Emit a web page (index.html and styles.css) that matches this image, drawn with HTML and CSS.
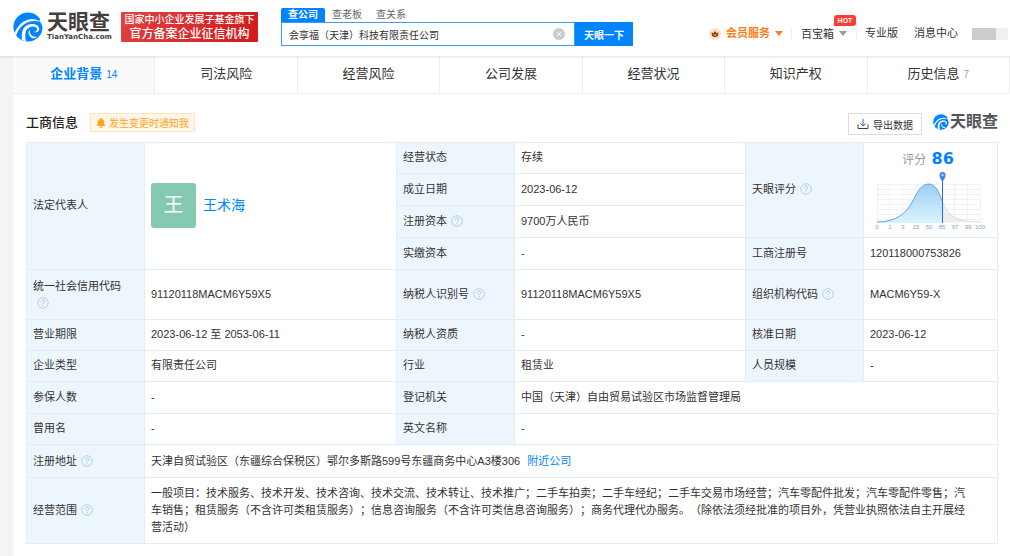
FILE: index.html
```html
<!DOCTYPE html>
<html lang="zh-CN">
<head>
  <meta charset="UTF-8">
  <meta name="viewport" content="width=device-width, initial-scale=1.0">
  <title>天眼查</title>
  <link rel="stylesheet" href="styles.css">
</head>
<body>

  <!-- shared icons -->
  <svg class="sprite" aria-hidden="true">
    <symbol id="logo" viewBox="0 0 30 30">
      <circle cx="15" cy="15" r="14.6" fill="#0084ff"/>
      <path d="M1 22 C4 15 8 10 14 8 C19 6 24 7 27 10 C22 8 17 9 13 11 C8 14 5 18 3 24 Z" fill="#fff"/>
      <path d="M9 28 C8 20 10 14 16 12.500 C20 11.500 25 12 26 16 C27 19 24 21 21 20 C24 20 25 17 23 15.500 C20 13.500 15 15 13 19 C12 22 12 26 13 29.500 Z" fill="#fff"/>
      <path d="M17 17.500 C16 22 19 25 24 25 C22 27 19 26.500 17 24.500 C15 22 15 19 17 17.500 Z" fill="#fff"/>
      <path d="M26 8 L30 6 V16 C29 13 28 11 26 8 Z" fill="#fff"/>
    </symbol>
    <symbol id="help" viewBox="0 0 12 12">
      <circle cx="6" cy="6" r="5.3" fill="none" stroke="#b4d0ea"/>
      <path d="M4.400 4.800 C4.400 2.600 7.700 2.600 7.700 4.600 C7.700 5.800 6 5.800 6 7.200 M6 8.200 V9.200" fill="none" stroke="#a3c5e6"/>
    </symbol>
  </svg>

  <header class="header">
    <a class="brand" href="#">
      <svg class="brand-icon"><use href="#logo"/></svg>
      <span class="brand-text">
        <span class="brand-name">天眼查</span>
        <span class="brand-site">TianYanCha.com</span>
      </span>
    </a>
    <div class="slogan">
      <span>国家中小企业发展子基金旗下</span>
      <span class="slogan-big">官方备案企业征信机构</span>
    </div>

    <form class="search">
      <div class="search-tabs">
        <button type="button" class="search-tab active">查公司</button>
        <button type="button" class="search-tab">查老板</button>
        <button type="button" class="search-tab">查关系</button>
      </div>
      <div class="search-row">
        <div class="search-field">
          <input type="text" aria-label="搜索公司" value="会享福（天津）科技有限责任公司">
          <button type="reset" class="clear" aria-label="清除">
            <svg viewBox="0 0 12 12"><circle cx="6" cy="6" r="6" fill="#ccc"/><path d="M4 4 L8 8 M8 4 L4 8" stroke="#fff"/></svg>
          </button>
        </div>
        <button type="button" class="search-btn">天眼一下</button>
      </div>
    </form>

    <nav class="nav">
      <a class="vip" href="#">
        <svg class="crown" viewBox="0 0 12 12"><circle cx="6" cy="6" r="6" fill="#fde0c5"/><path d="M2.500 4.500 L4.500 5 L6 3 L7.500 5 L9.500 4.500 L9 8 Q6 10 3 8 Z" fill="#8a4312"/><path d="M4.800 6.300 L6 7.500 L7.200 6.300" fill="none" stroke="#fde0c5"/></svg>
        会员服务<i class="caret"></i>
      </a>
      <a class="box" href="#">百宝箱<i class="caret"></i><b class="hot">HOT</b></a>
      <a class="pro" href="#">专业版</a>
      <a href="#">消息中心</a>
      <span class="user"></span>
    </nav>
  </header>

  <main class="page">
    <nav class="tabs">
      <a class="tab active" href="#">企业背景<small>14</small></a>
      <a class="tab" href="#">司法风险</a>
      <a class="tab" href="#">经营风险</a>
      <a class="tab" href="#">公司发展</a>
      <a class="tab" href="#">经营状况</a>
      <a class="tab" href="#">知识产权</a>
      <a class="tab" href="#">历史信息<small>7</small></a>
    </nav>

    <section class="content">
      <div class="title-bar">
        <h2>工商信息</h2>
        <button type="button" class="notify">
          <svg viewBox="0 0 10 10"><path d="M5 0 C5.600 0 5.800 .6 5.800 1 C7.500 1.400 8.300 2.800 8.300 4.500 V6.500 L9.500 8 H.5 L1.700 6.500 V4.500 C1.700 2.800 2.500 1.400 4.200 1 C4.200 .6 4.400 0 5 0 Z M3.500 8.700 H6.500 Q6 10 5 10 Q4 10 3.500 8.700 Z" fill="#ffa41c"/></svg>
          发生变更时通知我
        </button>
        <button type="button" class="export">
          <svg viewBox="0 0 12 12" fill="none" stroke="#444"><path d="M1 6.500 V10.500 H11 V6.500"/><path d="M6 1 V8 M3.500 5.500 L6 8 L8.500 5.500" stroke="#2c6fb5"/></svg>
          导出数据
        </button>
        <div class="mark">
          <svg><use href="#logo"/></svg>
          <span>天眼查</span>
        </div>
      </div>

      <table class="info">
        <colgroup>
          <col class="label"><col class="value-a">
          <col class="label"><col class="value-b">
          <col class="label"><col class="value-c">
        </colgroup>
        <tr class="compact">
          <th rowspan="4">法定代表人</th>
          <td rowspan="4">
            <div class="person"><span class="avatar">王</span><a href="#">王术海</a></div>
          </td>
          <th>经营状态</th>
          <td>存续</td>
          <th rowspan="3">天眼评分<svg class="help"><use href="#help"/></svg></th>
          <td rowspan="3" class="score">
            <div class="score-title">评分 <b>86</b></div>
            <svg class="chart" viewBox="0 0 112 60">
              <defs>
                <linearGradient id="fill" x1="0" y1="0" x2="0" y2="1">
                  <stop offset="0" stop-color="#9fcdf5"/>
                  <stop offset="1" stop-color="#d9f5fd"/>
                </linearGradient>
              </defs>
              <path d="M4 14.500 H107 M4 19.500 H107 M4 24.500 H107 M4 29.500 H107 M4 34.500 H107 M4 39.500 H107 M4 44.500 H107 M4 49.500 H107 M4.500 14 V52 M16.500 14 V52 M29.500 14 V52 M42.500 14 V52 M55.500 14 V52 M81.500 14 V52 M94.500 14 V52 M107.500 14 V52" stroke="#f2f2f2" fill="none"/>
              <path d="M69 31 C75 44 80 52 107 52 L69 53 Z" fill="#eee"/>
              <path d="M69 31 C75 44 80 52 107 52" fill="none" stroke="#ddd"/>
              <path d="M4 52 C45 52 38 14 56 14 C63 14 66 23 69 31 V53 H4 Z" fill="url(#fill)"/>
              <path d="M4 52 C45 52 38 14 56 14 C63 14 66 23 69 31" fill="none" stroke="#5aa5f5"/>
              <path d="M69.500 8 V53" stroke="#2468f2"/>
              <path d="M69.500 12 C67.500 8.500 66.500 7.500 66.500 5 A3 3 0 0 1 72.500 5 C72.500 7.500 71.500 8.500 69.500 12 Z" fill="#3c83f0"/>
              <circle cx="69.500" cy="5" r="1.300" fill="#a9cdfb"/>
              <g class="axis">
                <text x="4" y="59">0</text><text x="17" y="59">1</text><text x="30" y="59">3</text>
                <text x="43" y="59">15</text><text x="56" y="59">50</text><text x="69" y="59">85</text>
                <text x="82" y="59">97</text><text x="95" y="59">99</text><text x="107" y="59">100</text>
              </g>
            </svg>
          </td>
        </tr>
        <tr>
          <th>成立日期</th>
          <td>2023-06-12</td>
        </tr>
        <tr>
          <th>注册资本<svg class="help"><use href="#help"/></svg></th>
          <td>9700万人民币</td>
        </tr>
        <tr>
          <th>实缴资本</th>
          <td>-</td>
          <th>工商注册号</th>
          <td>120118000753826</td>
        </tr>
        <tr class="code">
          <th>统一社会信用代码<svg class="help"><use href="#help"/></svg></th>
          <td>91120118MACM6Y59X5</td>
          <th>纳税人识别号<svg class="help"><use href="#help"/></svg></th>
          <td>91120118MACM6Y59X5</td>
          <th>组织机构代码<svg class="help"><use href="#help"/></svg></th>
          <td>MACM6Y59-X</td>
        </tr>
        <tr class="compact">
          <th>营业期限</th>
          <td>2023-06-12 至 2053-06-11</td>
          <th>纳税人资质</th>
          <td>-</td>
          <th>核准日期</th>
          <td>2023-06-12</td>
        </tr>
        <tr class="compact">
          <th>企业类型</th>
          <td>有限责任公司</td>
          <th>行业</th>
          <td>租赁业</td>
          <th>人员规模</th>
          <td>-</td>
        </tr>
        <tr>
          <th>参保人数</th>
          <td>-</td>
          <th>登记机关</th>
          <td colspan="3">中国（天津）自由贸易试验区市场监督管理局</td>
        </tr>
        <tr class="compact">
          <th>曾用名</th>
          <td>-</td>
          <th>英文名称</th>
          <td colspan="3">-</td>
        </tr>
        <tr class="address">
          <th>注册地址<svg class="help"><use href="#help"/></svg></th>
          <td colspan="5">天津自贸试验区（东疆综合保税区）鄂尔多斯路599号东疆商务中心A3楼306<a class="nearby" href="#">附近公司</a></td>
        </tr>
        <tr>
          <th>经营范围<svg class="help"><use href="#help"/></svg></th>
          <td colspan="5" class="scope">一般项目：技术服务、技术开发、技术咨询、技术交流、技术转让、技术推广；二手车拍卖；二手车经纪；二手车交易市场经营；汽车零配件批发；汽车零配件零售；汽车销售；租赁服务（不含许可类租赁服务）；信息咨询服务（不含许可类信息咨询服务）；商务代理代办服务。（除依法须经批准的项目外，凭营业执照依法自主开展经营活动）</td>
        </tr>
      </table>
    </section>
  </main>

</body>
</html>
```
FILE: styles.css
```css
* {
  box-sizing: border-box;
}
body {
  margin: 0;
  background-color: #f4f4f4;
  color: #333;
  font-family: "Liberation Sans", "Noto Sans CJK SC", sans-serif;
  font-size: 11px;
  line-height: 17px;
  text-spacing-trim: space-all;
}
a {
  color: #0084ff;
  text-decoration: none;
}
button, input {
  font-family: inherit;
  font-size: 10px;
  border: 0;
  padding: 0;
  margin: 0;
  background: none;
  color: inherit;
}
button {
  cursor: pointer;
}
.sprite {
  display: block;
  width: 0;
  height: 0;
}

/* Header */
.header {
  display: flex;
  align-items: flex-start;
  height: 56px;
  padding-left: 13px;
  background-color: #fff;
  box-shadow: 0 1px 3px rgba(0,0,0,0.12);
  position: relative;
}
.brand {
  display: flex;
  gap: 4px;
  margin-top: 12px;
  color: #443e3c;
}
.brand-icon {
  width: 30px;
  height: 30px;
}
.brand-text {
  display: flex;
  flex-direction: column;
  width: 64px;
  font-weight: bold;
  white-space: nowrap;
}
.brand-name {
  font-size: 21px;
  line-height: 20px;
}
.brand-site {
  font-family: "DejaVu Sans", sans-serif;
  font-size: 7px;
  line-height: 10px;
}
.slogan {
  display: flex;
  flex-direction: column;
  align-items: center;
  width: 137px;
  height: 30px;
  margin: 12px 23px 0 10px;
  padding-top: 1px;
  border-radius: 1px;
  background: linear-gradient(120deg, #e44142, #cf1a1c);
  color: #fff;
  font-size: 10px;
  font-weight: 500;
  line-height: 14px;
  white-space: nowrap;
}
.slogan-big {
  font-size: 12px;
}
.search {
  flex: 0 1 352px;
  margin-top: 8px;
}
.search-tabs {
  display: flex;
}
.search-tab {
  width: 44px;
  height: 14px;
  line-height: 14px;
  color: #666;
}
.search-tab.active {
  background-color: #0084ff;
  color: #fff;
  font-weight: bold;
  border-radius: 2px 2px 0 0;
}
.search-row {
  display: flex;
  height: 24px;
}
.search-field {
  display: flex;
  align-items: center;
  flex: 1;
  padding: 0 9px 0 7px;
  border: 1px solid #3d9cf5;
}
.search-field input {
  flex: 1;
  min-width: 0;
  outline: none;
}
.clear, .clear svg {
  display: block;
  width: 12px;
  height: 12px;
}
.search-btn {
  width: 58px;
  background-color: #0084ff;
  color: #fff;
  font-weight: bold;
}
.nav {
  display: flex;
  align-items: center;
  margin-left: auto;
  padding-top: 25px;
  white-space: nowrap;
}
.nav a {
  display: flex;
  align-items: center;
  color: #333;
}
.nav .vip {
  color: #ff7d18;
  font-weight: bold;
}
.crown {
  width: 12px;
  height: 12px;
  margin-right: 5px;
}
.caret {
  margin-left: 5px;
  border: 4px solid transparent;
  border-top: 5px solid #999;
  border-bottom: 0;
}
.vip .caret {
  border-top-color: #ff7d18;
}
.nav .box {
  position: relative;
  margin: 0 8px;
  padding: 0 9px;
  border: solid #eee;
  border-width: 0 1px;
  line-height: 12px;
}
.hot {
  position: absolute;
  right: 0;
  top: -13px;
  width: 22px;
  border-radius: 3px 3px 3px 0;
  background-color: #ff3b30;
  color: #fff;
  font-size: 7px;
  line-height: 11px;
  text-align: center;
}
.nav .pro {
  margin-right: 16px;
}
.user {
  width: 36px;
  height: 12px;
  margin: 0 2px 0 14px;
  background: linear-gradient(90deg, #ccc 66%, #f1f1f1 66%);
}

/* Page */
.page {
  margin-left: 13px;
  min-height: 500px;
  background-color: #fff;
}
.tabs {
  display: flex;
  height: 38px;
  border-bottom: 1px solid #eee;
}
.tab {
  flex: 1;
  border-right: 1px solid #eee;
  color: #333;
  font-size: 13px;
  line-height: 36px;
  text-align: center;
}
.tab small {
  margin-left: 4px;
  font-size: 10px;
  font-weight: normal;
  color: #999;
}
.tab.active {
  background-color: #fafafa;
  color: #0084ff;
  font-weight: bold;
}
.tab.active small {
  color: #0084ff;
}
.content {
  padding: 19px 12px 12px 13px;
}
.title-bar {
  display: flex;
  align-items: flex-start;
  height: 29px;
}
h2 {
  margin: 0;
  font-size: 13px;
  font-weight: 500;
  line-height: 19px;
  color: #222;
}
.notify, .export {
  display: flex;
  align-items: center;
  justify-content: center;
}
.notify {
  gap: 3px;
  height: 19px;
  margin-left: 12px;
  padding: 0 5px;
  border: 1px solid #ffe3bb;
  background-color: #fff6ea;
  color: #ffa41c;
}
.notify svg {
  width: 10px;
  height: 10px;
}
.export {
  gap: 4px;
  width: 74px;
  height: 22px;
  margin-left: auto;
  border: 1px solid #ddd;
}
.export svg {
  width: 12px;
  height: 12px;
}
.mark {
  display: flex;
  gap: 1px;
  margin: 1px 0 0 11px;
  color: #55565b;
  font-size: 16px;
  font-weight: bold;
  line-height: 16px;
}
.mark svg {
  width: 16px;
  height: 16px;
}

/* Company info table */
.info {
  width: 100%;
  table-layout: fixed;
  border-collapse: collapse;
}
.label {
  width: 118px;
}
.value-a {
  width: 252px;
}
.value-b {
  width: 231px;
}
.value-c {
  width: 134px;
}
.info th, .info td {
  padding: 7px 6px;
  border: 1px solid #e1edf7;
  text-align: left;
  font-weight: normal;
}
.info th {
  background-color: #eef6fd;
}
.info .compact th, .info .compact td {
  padding-top: 6px;
}
.code {
  height: 50px;
}
.address {
  height: 33px;
}
.info .scope {
  padding-right: 26px;
}
.help {
  width: 12px;
  height: 12px;
  margin: 0 4px;
  vertical-align: -2px;
}
.person {
  display: flex;
  align-items: center;
  gap: 7px;
  font-size: 14px;
}
.avatar {
  width: 45px;
  height: 45px;
  border-radius: 3px;
  background-color: #84cab0;
  color: #fff;
  font-size: 20px;
  line-height: 44px;
  text-align: center;
}
.nearby {
  margin-left: 7px;
}
.info .compact .score {
  padding: 0;
  vertical-align: top;
}
.score-title {
  padding: 6px 5px 0 0;
  color: #999;
  font-size: 12px;
  line-height: 20px;
  text-align: center;
}
.score-title b {
  margin-left: 2px;
  color: #0084ff;
  font-family: "DejaVu Sans", sans-serif;
  font-size: 16px;
}
.chart {
  display: block;
  width: 112px;
  height: 60px;
  margin: 0 auto 0 9px;
}
.axis text {
  fill: #7f9fc9;
  font-size: 6px;
  text-anchor: middle;
}
```
